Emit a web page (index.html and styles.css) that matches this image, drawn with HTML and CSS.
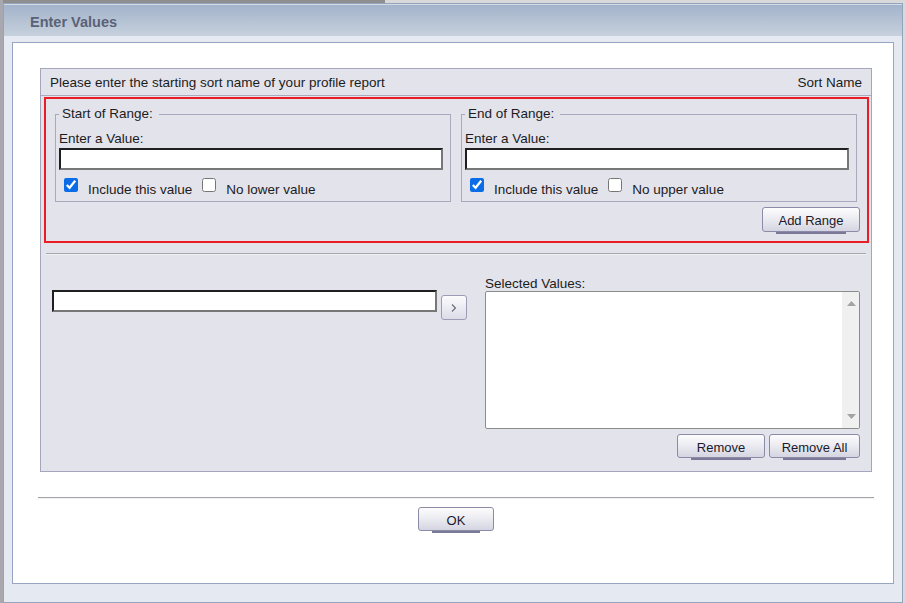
FILE: index.html
```html
<!DOCTYPE html>
<html>
<head>
<meta charset="utf-8">
<title>Enter Values</title>
<link rel="stylesheet" href="styles.css">
</head>
<body>
<div class="dialog">
  <div class="titlebar"><span class="title">Enter Values</span></div>
  <div class="dialog-body">
    <div class="content">
      <div class="panel">
        <div class="panel-header">
          <span>Please enter the starting sort name of your profile report</span>
          <span>Sort Name</span>
        </div>
        <div class="range-box">
          <div class="fieldsets">
            <fieldset class="range">
              <legend>Start of Range:</legend>
              <div class="field-label">Enter a Value:</div>
              <input class="text-input" type="text">
              <div class="check-row">
                <input class="check" type="checkbox" checked>
                <span class="check-text">Include this value</span>
                <input class="check check-second" type="checkbox">
                <span class="check-text">No lower value</span>
              </div>
            </fieldset>
            <fieldset class="range">
              <legend>End of Range:</legend>
              <div class="field-label">Enter a Value:</div>
              <input class="text-input" type="text">
              <div class="check-row">
                <input class="check" type="checkbox" checked>
                <span class="check-text">Include this value</span>
                <input class="check check-second" type="checkbox">
                <span class="check-text">No upper value</span>
              </div>
            </fieldset>
          </div>
          <div class="add-row"><button class="btn btn-add">Add Range</button></div>
        </div>
        <div class="separator"></div>
        <div class="lower">
          <div class="lower-left">
            <input class="text-input value-input" type="text">
            <button class="arrow-btn" aria-label="Add">
              <svg width="8" height="10" viewBox="0 0 8 10"><path d="M2 1.5 L5.5 5 L2 8.5" fill="none" stroke="#6a6a78" stroke-width="1.1"/></svg>
            </button>
          </div>
          <div class="lower-right">
            <div class="list-label">Selected Values:</div>
            <div class="listbox">
              <div class="list-area"></div>
              <div class="scroll">
                <svg width="9" height="5" viewBox="0 0 9 5"><path d="M0 5 L4.5 0 L9 5 Z" fill="#a3a3a3"/></svg>
                <svg width="9" height="5" viewBox="0 0 9 5"><path d="M0 0 L4.5 5 L9 0 Z" fill="#a3a3a3"/></svg>
              </div>
            </div>
            <div class="btn-row">
              <button class="btn btn-remove">Remove</button>
              <button class="btn btn-remove-all">Remove All</button>
            </div>
          </div>
        </div>
      </div>
      <div class="footer-sep"></div>
      <div class="footer"><button class="btn btn-ok">OK</button></div>
    </div>
  </div>
</div>
</body>
</html>
```
FILE: styles.css
```css
* { box-sizing: border-box; }

html, body {
  margin: 0;
  padding: 0;
  height: 603px;
  overflow: hidden;
}

body {
  padding: 3px 3px 0 3px;
  background:
    linear-gradient(to right, #a8a8ae 0 3px, transparent 3px),
    linear-gradient(to right, #8f8f8f 0 385px, #d9d9d9 385px);
  font-family: "Liberation Sans", Arial, sans-serif;
  font-size: 13.5px;
  color: #1c1c1c;
}

.dialog {
  width: 900px;
  height: 600px;
  border: 1px solid #94a4bf;
  background: #e4e9f2;
  display: flex;
  flex-direction: column;
}

.titlebar {
  height: 32px;
  border-top: 1px solid #d3dbe6;
  background: linear-gradient(#a3b3ca, #c7d1dd);
  padding-left: 26px;
  display: flex;
  align-items: center;
}

.title {
  font-weight: bold;
  font-size: 14.5px;
  color: #596276;
  padding-top: 2px;
}

.dialog-body {
  padding: 6px 8px 18px 8px;
  flex: 1;
  display: flex;
}

.content {
  flex: 1;
  background: #ffffff;
  border: 1px solid #97a5c2;
  padding: 25px 21px 0 27px;
}

.panel {
  background: #e3e3ec;
  border: 1px solid #a4a7bb;
  height: 404px;
}

.panel-header {
  height: 27px;
  border-bottom: 1px solid #a8abbd;
  display: flex;
  justify-content: space-between;
  align-items: center;
  padding: 0 9px 0 9px;
}

.range-box {
  margin: 1px 2px 0 3px;
  height: 146px;
  border: 2px solid #ea1c26;
  padding: 7px 9px 0 9px;
}

.fieldsets {
  display: flex;
  gap: 10px;
}

.range {
  width: 396px;
  height: 96px;
  margin: 0;
  border: 1px solid #a9a9bd;
  padding: 0 7px 0 3px;
  min-width: 0;
}

.range legend {
  padding: 0 6px 0 3px;
  line-height: 16px;
}

.field-label {
  line-height: 16px;
  margin-top: 9px;
}

.text-input {
  display: block;
  width: 384px;
  height: 22px;
  margin: 1px 0 0 0;
  padding: 0 3px;
  border-style: solid;
  border-width: 2px;
  border-color: #1f1f1f #777777 #777777 #1f1f1f;
  background: #ffffff;
  outline: none;
  font: inherit;
}

.check-row {
  display: flex;
  align-items: flex-start;
  margin-top: 6px;
}

.check {
  width: 14px;
  height: 14px;
  margin: 2px 10px 0 5px;
  accent-color: #0b6ce8;
}

.check-second {
  margin-left: 10px;
}

.check-text {
  line-height: 16px;
  margin-top: 6px;
}

.add-row {
  display: flex;
  justify-content: flex-end;
  margin-top: 5px;
  margin-right: -2px;
}

.btn {
  position: relative;
  height: 25px;
  border: 1px solid #8b8ba8;
  border-radius: 3px;
  background: linear-gradient(#fdfdfe 0%, #ececf2 45%, #d5d5e2 100%);
  font-family: "Liberation Sans", Arial, sans-serif;
  font-size: 13px;
  color: #1a1a2c;
  padding: 2px 0 0 0;
  cursor: pointer;
}

.btn::after {
  content: "";
  position: absolute;
  left: 13px;
  right: 13px;
  bottom: -3px;
  height: 2px;
  background: #7a7a98;
}

.btn-add { width: 98px; }

.separator {
  margin: 10px 5px 0 5px;
  height: 2px;
  border-top: 1px solid #a6a6ad;
  background: #f1f1f5;
}

.lower {
  display: flex;
  align-items: flex-start;
  padding: 0 10px 0 11px;
  gap: 18px;
}

.lower-left {
  display: flex;
  align-items: flex-start;
  gap: 4px;
  margin-top: 35px;
}

.value-input {
  width: 385px;
  margin: 0;
}

.arrow-btn {
  width: 26px;
  height: 25px;
  margin-top: 5px;
  border: 1px solid #9c9cb8;
  border-radius: 3px;
  background: linear-gradient(#fbfbfd, #dcdce8);
  padding: 0;
  display: flex;
  align-items: center;
  justify-content: center;
}

.lower-right {
  width: 375px;
  margin-top: 22px;
}

.list-label {
  line-height: 14px;
}

.listbox {
  height: 138px;
  border: 1px solid #8c8c8c;
  border-radius: 2px;
  background: #ffffff;
  display: flex;
  overflow: hidden;
}

.list-area { flex: 1; }

.scroll {
  width: 17px;
  background: #f0f0f0;
  display: flex;
  flex-direction: column;
  justify-content: space-between;
  align-items: center;
  padding: 9px 0 9px 1px;
}

.btn-row {
  display: flex;
  justify-content: flex-end;
  gap: 4px;
  margin-top: 5px;
}

.btn-row .btn { height: 24px; }

.btn-remove { width: 88px; }
.btn-remove-all { width: 91px; }

.footer-sep {
  margin: 25px -2px 0 -2px;
  height: 2px;
  border-top: 1px solid #a3a3a8;
  background: #f2f2f4;
}

.footer {
  display: flex;
  justify-content: center;
  margin: 8px -2px 0 -2px;
}

.btn-ok {
  width: 76px;
  height: 24px;
}
```
